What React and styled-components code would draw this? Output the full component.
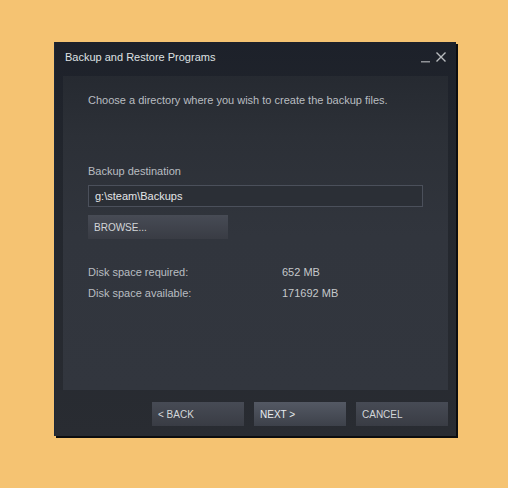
import React from 'react';
import styled, { createGlobalStyle } from 'styled-components';

const Global = createGlobalStyle`
	html, body {
		margin: 0;
		padding: 0;
		background: #f5c372;
	}
	body {
		font-family: "Liberation Sans", Arial, sans-serif;
	}
`;

const Page = styled.div`
	width: 508px;
	height: 488px;
	padding: 42px 0 0 54px;
	box-sizing: border-box;
	background: #f5c372;
`;

const Window = styled.div`
	width: 402px;
	height: 394px;
	box-sizing: border-box;
	display: flex;
	flex-direction: column;
	background: linear-gradient(180deg, #1d212a 0px, #22262d 120px, #292c32 100%);
	border-left: 1px solid #1d2838;
	box-shadow: 2px 2px 0 #0c0d0f;
	padding: 0 8px 10px 8px;
`;

const TitleBar = styled.div`
	height: 34px;
	display: flex;
	align-items: center;
	justify-content: space-between;
	padding: 0 0 4px 2px;
	box-sizing: border-box;
`;

const Title = styled.span`
	color: #dfe1e3;
	font-size: 11px;
`;

const Controls = styled.div`
	display: flex;
	align-items: center;
	gap: 5px;
	margin-right: 1px;
`;

const Panel = styled.div`
	flex: 1;
	background: linear-gradient(180deg, #262a31 0px, #2c3037 60px, #31353d 160px, #32363e 100%);
	padding: 18px 25px 0 25px;
	display: flex;
	flex-direction: column;
`;

const Text = styled.div`
	color: ${(p) => (p.bright ? '#c5c8cb' : '#b9bdc1')};
	font-size: 11px;
	line-height: 13px;
`;

const Label = styled(Text)`
	margin-top: ${(p) => p.gap || 0}px;
`;

const Input = styled.div`
	margin-top: 7px;
	height: 22px;
	width: 335px;
	box-sizing: border-box;
	border: 1px solid #4b505b;
	background: #2b2f36;
	color: #e4e6e8;
	font-size: 11px;
	display: flex;
	align-items: center;
	padding-left: 6px;
`;

const Button = styled.div`
	width: ${(p) => p.width || 92}px;
	height: 24px;
	box-sizing: border-box;
	display: flex;
	align-items: center;
	padding-left: 6px;
	font-size: 10px;
	color: ${(p) => (p.primary ? '#e8ebee' : '#d3d6d9')};
	background: ${(p) =>
		p.primary
			? 'linear-gradient(180deg, #545964 0%, #3d414a 100%)'
			: 'linear-gradient(180deg, #474b55 0%, #393c44 100%)'};
`;

const BrowseWrap = styled.div`
	margin-top: 8px;
`;

const StatRow = styled.div`
	display: grid;
	grid-template-columns: 194px 1fr;
	margin-top: ${(p) => p.gap || 0}px;
`;

const Footer = styled.div`
	display: flex;
	justify-content: flex-end;
	gap: 10px;
	padding-top: 12px;
`;

const CloseIcon = () => (
	<svg width="12" height="12" viewBox="0 0 12 12">
		<path d="M1.5 1.5 L10.5 10.5 M10.5 1.5 L1.5 10.5" stroke="#b9bcbf" strokeWidth="1.4" />
	</svg>
);

const MinIcon = () => (
	<svg width="9" height="12" viewBox="0 0 9 12">
		<rect x="0" y="10" width="9" height="1.5" fill="#8f9297" />
	</svg>
);

const App = () => (
	<Page>
		<Global />
		<Window>
			<TitleBar>
				<Title>Backup and Restore Programs</Title>
				<Controls>
					<MinIcon />
					<CloseIcon />
				</Controls>
			</TitleBar>
			<Panel>
				<Text>Choose a directory where you wish to create the backup files.</Text>
				<Label gap={58}>Backup destination</Label>
				<Input>g:\steam\Backups</Input>
				<BrowseWrap>
					<Button width={140}>BROWSE...</Button>
				</BrowseWrap>
				<StatRow gap={27}>
					<Text>Disk space required:</Text>
					<Text bright>652 MB</Text>
				</StatRow>
				<StatRow gap={8}>
					<Text>Disk space available:</Text>
					<Text bright>171692 MB</Text>
				</StatRow>
			</Panel>
			<Footer>
				<Button>&lt; BACK</Button>
				<Button primary>NEXT &gt;</Button>
				<Button>CANCEL</Button>
			</Footer>
		</Window>
	</Page>
);

export default App;
